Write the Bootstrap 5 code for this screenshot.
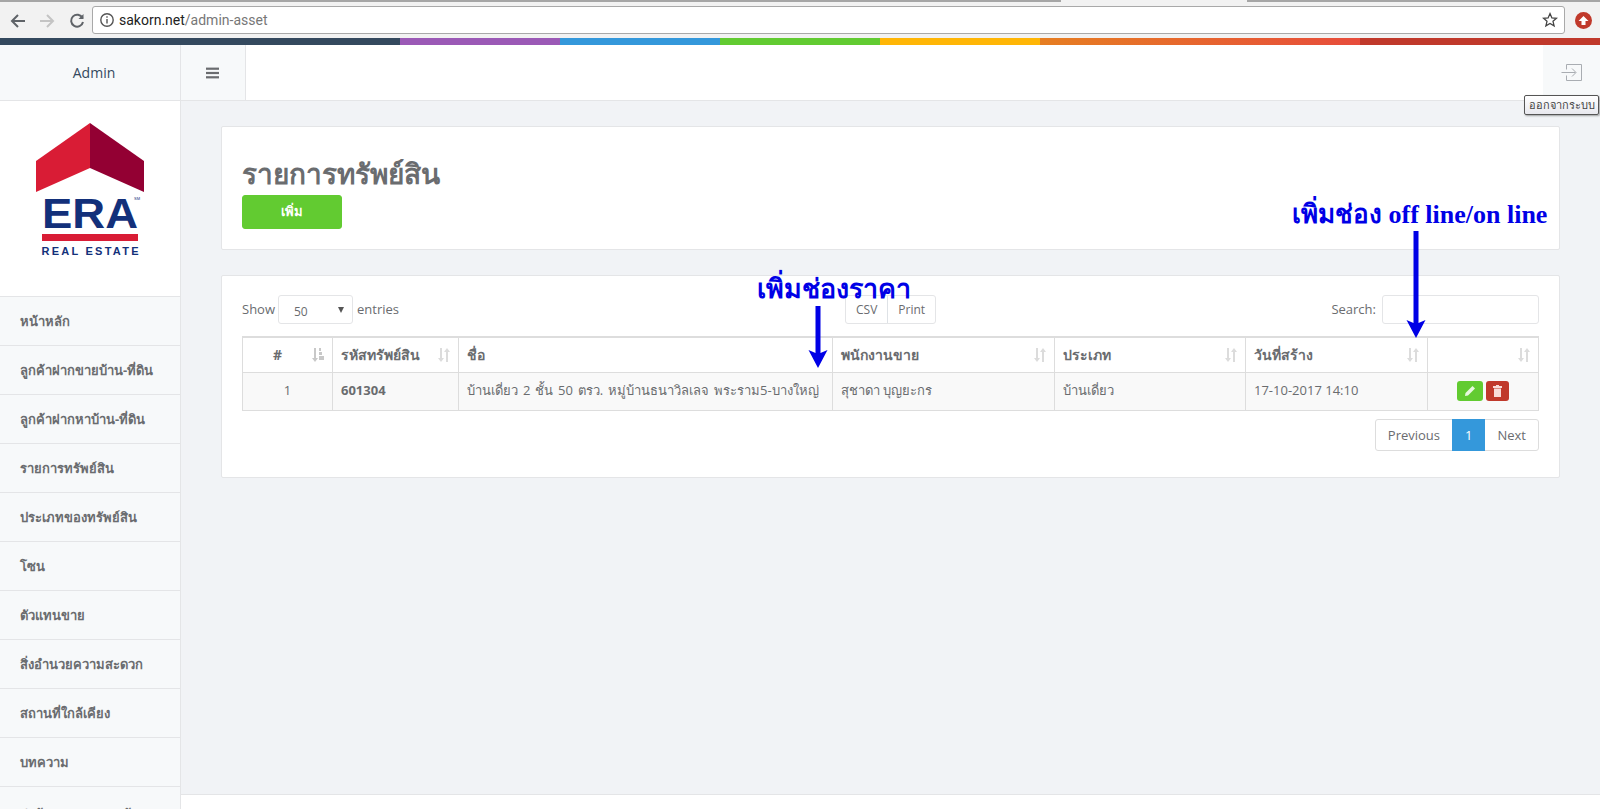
<!DOCTYPE html>
<html lang="th">
<head>
  <meta charset="UTF-8">
  <meta name="viewport" content="width=device-width, initial-scale=1.0">
  <title>sakorn.net/admin-asset</title>
  <link href="https://cdn.jsdelivr.net/npm/bootstrap@5.3.3/dist/css/bootstrap.min.css" rel="stylesheet">
  <style>
    html, body {
      height: 100%;
      overflow: hidden;
    }

    body {
      font-family: "Open Sans", "Noto Sans", sans-serif;
      font-size: 13px;
      color: #6a6c6f;
      background: #f1f3f6;
    }

    /* browser bar */
    .tab-edges {
      height: 2px;
      flex: none;
      background: linear-gradient(to right,
        #a6a6a6 0 1061px, #f2f2f2 1061px 1247px, #a6a6a6 1247px);
    }

    .browser-bar {
      height: 36px;
      flex: none;
      background: #f2f2f2;
      padding: 4px 10px 4px 0;
    }

    .browser-btn {
      width: 28px;
      flex: none;
    }

    .btn-back {
      width: 33px;
      padding-left: 3px;
    }

    .btn-reload {
      width: 31px;
    }

    .url-box {
      height: 28px;
      flex: 1;
      background: #fff;
      border: 1px solid #a9a9a9;
      border-radius: 3px;
      font-family: Roboto, sans-serif;
      font-size: 14px;
      padding: 0 6px;
      color: #222;
    }

    .url-box span {
      color: #777;
    }

    .ext-dot {
      width: 17px;
      height: 17px;
      margin-left: 10px;
      margin-right: -2px;
      border-radius: 50%;
      background: #c0392b;
    }

    .color-strip {
      height: 7px;
      flex: none;
      background: linear-gradient(to right,
        #34495e 0 400px, #9b59b6 400px 560px, #3498db 560px 720px, #62cb31 720px 880px,
        #ffb606 880px 1040px, #e67e22 1040px, #e74c3c 1360px, #c0392b 1360px);
    }

    /* top header */
    .top-head {
      height: 56px;
      flex: none;
      background: #fff;
      border-bottom: 1px solid #e4e5e7;
    }

    .brand-box {
      width: 181px;
      padding-left: 8px;
      background: #f7f9fa;
      border-right: 1px solid #e4e5e7;
      font-size: 14px;
      color: #34495e;
    }

    .toggle-box {
      width: 65px;
      background: #f7f9fa;
      border-right: 1px solid #e4e5e7;
    }

    .logout-box {
      width: 57px;
      background: #f7f9fa;
      margin-left: auto;
    }

    .tip-box {
      position: absolute;
      top: 95px;
      left: 1524px;
      width: 75px;
      height: 20px;
      border: 1px solid #555;
      border-radius: 2px;
      background: linear-gradient(#fff, #e8e8ee);
      box-shadow: 1px 1px 2px rgba(0, 0, 0, .35);
      font-family: "Noto Sans", sans-serif;
      font-size: 11px;
      line-height: 18px;
      text-align: center;
      color: #444;
      z-index: 5;
    }

    /* sidebar */
    .side-col {
      width: 181px;
      flex: none;
      background: #f7f9fa;
      border-right: 1px solid #e4e5e7;
    }

    .logo-box {
      height: 195px;
      background: #fff;
      padding-top: 22px;
    }

    .side-item {
      display: block;
      height: 49px;
      line-height: 48px;
      padding-left: 20px;
      border-top: 1px solid #e4e5e7;
      color: #6a6c6f;
      font-weight: 700;
      font-size: 13px;
      text-decoration: none;
      white-space: nowrap;
    }

    .side-item:last-child {
      line-height: 54px;
    }

    /* content */
    .main-col {
      flex: 1;
      min-width: 0;
    }

    .content-area {
      flex: 1;
      padding: 25px 40px 0;
    }

    .foot-bar {
      height: 15px;
      flex: none;
      background: #fff;
      border-top: 1px solid #e4e5e7;
    }

    .panel-box {
      background: #fff;
      border: 1px solid #e4e5e7;
      border-radius: 2px;
      padding: 20px;
    }

    .title-panel {
      height: 124px;
      margin-bottom: 25px;
    }

    .list-panel {
      height: 203px;
      padding-top: 19px;
    }

    .page-title {
      font-size: 28px;
      font-weight: 700;
      line-height: 43px;
      margin: 5px 0 0;
      color: #6a6c6f;
    }

    .add-btn {
      width: 100px;
      height: 34px;
      padding: 0;
      background: #62cb31;
      border: 1px solid #62cb31;
      border-radius: 3px;
      color: #fff;
      font-size: 13px;
      font-weight: 700;
    }

    .tool-row {
      height: 29px;
      margin-bottom: 12px;
    }

    .len-select {
      width: 75px;
      height: 29px;
      margin: 0 4px 0 3px;
      padding: 4px 0 0 15px;
      background: #fff;
      border: 1px solid #e4e5e7;
      border-radius: 3px;
      font-size: 12px;
    }

    .caret-down {
      border-left: 3.5px solid transparent;
      border-right: 3.5px solid transparent;
      border-top: 6px solid #555;
      margin: 0 8px 3px 0;
    }

    .export-btns {
      position: absolute;
      left: 603px;
      top: 0;
      height: 29px;
      border: 1px solid #e4e5e7;
      border-radius: 3px;
      font-size: 12px;
    }

    .export-btns div {
      padding: 5px 10px 0;
      height: 100%;
    }

    .search-label {
      margin-right: 6px;
    }

    .search-box {
      width: 157px;
      height: 29px;
      border: 1px solid #e4e5e7;
      border-radius: 3px;
      background: #fff;
    }

    .asset-table {
      width: 1296px;
      table-layout: fixed;
      border-collapse: collapse;
      color: #6a6c6f;
      font-size: 13px;
    }

    .asset-table th,
    .asset-table td {
      border: 1px solid #ddd;
      padding: 0 8px;
      vertical-align: middle;
      white-space: nowrap;
    }

    .asset-table th {
      height: 35px;
      position: relative;
      border-top-width: 2px;
      font-size: 14px;
    }

    .asset-table td {
      height: 38px;
      background: #f9f9f9;
    }

    .asset-table .num-head {
      padding-right: 28px;
      text-align: center;
    }

    .asset-table .name-cell {
      word-spacing: 1.5px;
    }

    .c-num { width: 90px; }
    .c-code { width: 126px; }
    .c-name { width: 374px; }
    .c-staff { width: 222px; }
    .c-type { width: 191px; }
    .c-date { width: 182px; }
    .c-act { width: 111px; }

    .sort-mark {
      position: absolute;
      right: 7px;
      top: 9px;
    }

    .act-btn {
      width: 26px;
      height: 20px;
      border: 0;
      border-radius: 3px;
      padding: 0;
    }

    .act-edit {
      background: #62cb31;
    }

    .act-del {
      width: 23px;
      background: #c0392b;
    }

    .pager-row {
      margin-top: 8px;
      height: 32px;
      font-size: 13px;
    }

    .pager-box {
      border: 1px solid #ddd;
      border-radius: 3px;
      height: 32px;
    }

    .pager-box div {
      padding: 0 12px;
      line-height: 30px;
    }

    .pager-box .now-page {
      background: #3498db;
      color: #fff;
      height: 32px;
      margin-top: -1px;
      padding: 0 13px;
      line-height: 32px;
    }

    /* handwritten notes over the page */
    .note-text {
      position: absolute;
      font-family: "Liberation Serif", "Noto Sans", serif;
      font-weight: 700;
      color: #0000e6;
      white-space: nowrap;
      z-index: 6;
    }

    .note-price {
      left: 757px;
      top: 269px;
      font-size: 26.8px;
    }

    .note-online {
      left: 1292px;
      top: 195px;
      font-size: 26px;
    }

    .note-arrow {
      position: absolute;
      z-index: 6;
    }

    .arrow-price {
      left: 808px;
      top: 306px;
    }

    .arrow-online {
      left: 1406px;
      top: 231px;
    }
  </style>
</head>
<body class="d-flex flex-column">

  <div class="tab-edges"></div>
  <div class="browser-bar d-flex align-items-center">
    <div class="browser-btn btn-back text-center">
      <svg width="16" height="16" viewBox="0 0 16 16" fill="none" stroke="#5f6368" stroke-width="2"><path d="M15 8H2M8 2L2 8l6 6"/></svg>
    </div>
    <div class="browser-btn text-center">
      <svg width="16" height="16" viewBox="0 0 16 16" fill="none" stroke="#c4c4c4" stroke-width="2"><path d="M1 8h13M8 2l6 6-6 6"/></svg>
    </div>
    <div class="browser-btn btn-reload text-center">
      <svg width="16" height="16" viewBox="0 0 16 16" fill="none" stroke="#5f6368" stroke-width="2"><path d="M13.5 5A6 6 0 1 0 14 9"/><path d="M14.5 1v5h-5" fill="#5f6368" stroke="none"/></svg>
    </div>
    <div class="url-box d-flex align-items-center">
      <svg class="me-1" width="16" height="16" viewBox="0 0 16 16" fill="none" stroke="#555" stroke-width="1.4"><circle cx="8" cy="8" r="6.2"/><path d="M8 7v4.500M8 4.200v1.600"/></svg>
      sakorn.net<span>/admin-asset</span>
      <svg class="ms-auto" width="16" height="16" viewBox="0 0 16 16" fill="none" stroke="#444" stroke-width="1.3"><path d="M8 1.600l1.900 4.300 4.600.4-3.500 3 1.100 4.600L8 11.500l-4.100 2.400L5 9.300l-3.500-3 4.600-.4z"/></svg>
    </div>
    <div class="ext-dot d-flex align-items-center justify-content-center">
      <svg width="11" height="11" viewBox="0 0 11 11" fill="#fff"><path d="M5.500 1L10.500 6H7.500V10H3.500V6H.5z"/></svg>
    </div>
  </div>

  <div class="color-strip"></div>

  <div class="top-head d-flex">
    <div class="brand-box d-flex align-items-center justify-content-center">Admin</div>
    <div class="toggle-box d-flex align-items-center justify-content-center">
      <svg width="14" height="12" viewBox="0 0 14 12" fill="#6a6c6f"><rect width="13" height="2.200" y=".6"/><rect width="13" height="2.200" y="4.900"/><rect width="13" height="2.200" y="9.200"/></svg>
    </div>
    <div class="logout-box d-flex align-items-center justify-content-center">
      <svg width="22" height="18" viewBox="0 0 22 18" fill="none" stroke="#a9adb2" stroke-width="1"><path d="M5.500 5.500V.5h15v16h-15v-5"/><path d="M.5 8.500h14M11 4.500l4 4-4 4"/></svg>
    </div>
  </div>
  <div class="tip-box">ออกจากระบบ</div>

  <div class="d-flex flex-fill overflow-hidden">
    <div class="side-col">
      <div class="logo-box text-center">
        <svg width="110" height="134" viewBox="0 0 110 134">
          <polygon points="55,0 55,45 1,69 1,38" fill="#d91c35"/>
          <polygon points="55,0 55,45 109,69 109,38" fill="#930033"/>
          <text x="55" y="105" text-anchor="middle" font-family="Liberation Sans, sans-serif" font-weight="700" font-size="43" fill="#13307a" textLength="96" lengthAdjust="spacingAndGlyphs">ERA</text>
          <text x="99" y="77" font-family="Liberation Sans, sans-serif" font-size="4" fill="#13307a">SM</text>
          <rect x="7" y="111" width="96" height="7" fill="#d91c35"/>
          <text x="55" y="132" text-anchor="middle" font-family="Liberation Sans, sans-serif" font-weight="700" font-size="11" fill="#13307a" textLength="97">REAL ESTATE</text>
        </svg>
      </div>
      <a class="side-item" href="#">หน้าหลัก</a>
      <a class="side-item" href="#">ลูกค้าฝากขายบ้าน-ที่ดิน</a>
      <a class="side-item" href="#">ลูกค้าฝากหาบ้าน-ที่ดิน</a>
      <a class="side-item" href="#">รายการทรัพย์สิน</a>
      <a class="side-item" href="#">ประเภทของทรัพย์สิน</a>
      <a class="side-item" href="#">โซน</a>
      <a class="side-item" href="#">ตัวแทนขาย</a>
      <a class="side-item" href="#">สิ่งอำนวยความสะดวก</a>
      <a class="side-item" href="#">สถานที่ใกล้เคียง</a>
      <a class="side-item" href="#">บทความ</a>
      <a class="side-item" href="#">ส่งข้อความจากลูกค้า</a>
    </div>

    <div class="main-col d-flex flex-column">
      <div class="content-area">
        <div class="panel-box title-panel">
          <h2 class="page-title">รายการทรัพย์สิน</h2>
          <button class="btn add-btn" type="button">เพิ่ม</button>
        </div>

        <div class="panel-box list-panel">
          <div class="tool-row d-flex align-items-center position-relative">
            <span>Show</span>
            <div class="len-select d-flex justify-content-between align-items-center">50 <i class="caret-down"></i></div>
            <span>entries</span>
            <div class="export-btns d-flex">
              <div class="border-end">CSV</div>
              <div>Print</div>
            </div>
            <span class="ms-auto search-label">Search:</span>
            <div class="search-box"></div>
          </div>

          <table class="asset-table">
            <colgroup>
              <col class="c-num"><col class="c-code"><col class="c-name"><col class="c-staff"><col class="c-type"><col class="c-date"><col class="c-act">
            </colgroup>
            <thead>
              <tr>
                <th class="num-head">#<svg class="sort-mark" width="14" height="16" viewBox="0 0 14 16" fill="#c8c8c8"><path d="M3 1h2v10h2l-3 4-3-4h2z"/><path d="M8 1h2v3H8zM8 5h3v3H8zM8 9h5v4H8z"/></svg></th>
                <th>รหัสทรัพย์สิน<svg class="sort-mark" width="14" height="16" viewBox="0 0 14 16" fill="#dcdcdc"><path d="M3 1h2v10h2l-3 4-3-4h2zM10 1l3 4h-2v10H9V5H7z"/></svg></th>
                <th>ชื่อ</th>
                <th>พนักงานขาย<svg class="sort-mark" width="14" height="16" viewBox="0 0 14 16" fill="#dcdcdc"><path d="M3 1h2v10h2l-3 4-3-4h2zM10 1l3 4h-2v10H9V5H7z"/></svg></th>
                <th>ประเภท<svg class="sort-mark" width="14" height="16" viewBox="0 0 14 16" fill="#dcdcdc"><path d="M3 1h2v10h2l-3 4-3-4h2zM10 1l3 4h-2v10H9V5H7z"/></svg></th>
                <th>วันที่สร้าง<svg class="sort-mark" width="14" height="16" viewBox="0 0 14 16" fill="#dcdcdc"><path d="M3 1h2v10h2l-3 4-3-4h2zM10 1l3 4h-2v10H9V5H7z"/></svg></th>
                <th><svg class="sort-mark" width="14" height="16" viewBox="0 0 14 16" fill="#dcdcdc"><path d="M3 1h2v10h2l-3 4-3-4h2zM10 1l3 4h-2v10H9V5H7z"/></svg></th>
              </tr>
            </thead>
            <tbody>
              <tr>
                <td class="text-center">1</td>
                <td class="fw-bold">601304</td>
                <td class="name-cell">บ้านเดี่ยว 2 ชั้น 50 ตรว. หมู่บ้านธนาวิลเลจ พระราม5-บางใหญ่</td>
                <td>สุชาดา บุญยะกร</td>
                <td>บ้านเดี่ยว</td>
                <td>17-10-2017 14:10</td>
                <td class="text-center">
                  <button class="btn act-btn act-edit d-inline-flex align-items-center justify-content-center" type="button">
                    <svg width="12" height="12" viewBox="0 0 12 12" fill="#e8f8df"><path d="M8.500 1l2.500 2.500L4 10.500 1 11l.5-3z"/></svg>
                  </button>
                  <button class="btn act-btn act-del d-inline-flex align-items-center justify-content-center" type="button">
                    <svg width="9" height="12" viewBox="0 0 9 12" fill="#f8dcd8"><path d="M3 0h3v1h3v2H0V1h3zM1 3.500h7V12H1z"/></svg>
                  </button>
                </td>
              </tr>
            </tbody>
          </table>

          <div class="pager-row d-flex justify-content-end">
            <div class="pager-box d-flex">
              <div>Previous</div>
              <div class="now-page">1</div>
              <div>Next</div>
            </div>
          </div>
        </div>
      </div>
      <div class="foot-bar"></div>
    </div>
  </div>

  <div class="note-text note-price">เพิ่มช่องราคา</div>
  <svg class="note-arrow arrow-price" width="20" height="62" viewBox="0 0 20 62" fill="#0000e6"><path d="M7.500 0h5v47l7-3-9.500 18L.5 44l7 3z"/></svg>

  <div class="note-text note-online">เพิ่มช่อง off line/on line</div>
  <svg class="note-arrow arrow-online" width="20" height="107" viewBox="0 0 20 107" fill="#0000e6"><path d="M7.500 0h5v92l7-3-9.500 18L.5 89l7 3z"/></svg>

  <script src="https://cdn.jsdelivr.net/npm/bootstrap@5.3.3/dist/js/bootstrap.bundle.min.js"></script>
</body>
</html>
